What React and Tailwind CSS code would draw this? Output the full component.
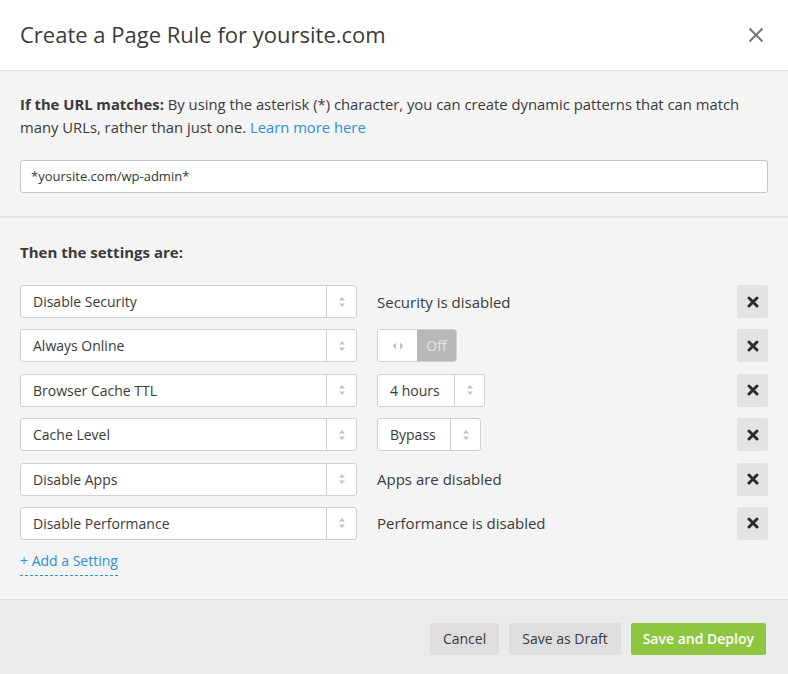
import React from 'react';

const rows = [
  { label: 'Disable Security', kind: 'text', value: 'Security is disabled' },
  { label: 'Always Online', kind: 'toggle' },
  { label: 'Browser Cache TTL', kind: 'select', value: '4 hours', width: 'w-[108px]' },
  { label: 'Cache Level', kind: 'select', value: 'Bypass', width: 'w-[104px]' },
  { label: 'Disable Apps', kind: 'text', value: 'Apps are disabled' },
  { label: 'Disable Performance', kind: 'text', value: 'Performance is disabled' },
];

const Arrows = () => (
  <svg width="8" height="12" viewBox="0 0 8 12" className="text-[#c2c2c2]">
    <path d="M4 1 L7 4.5 H1 Z" fill="currentColor" />
    <path d="M4 11 L7 7.5 H1 Z" fill="currentColor" />
  </svg>
);

const Select = ({ value, className }) => (
  <div className={`flex h-[33px] bg-white border border-[#cfcfcf] rounded-[3px] ${className}`}>
    <div className="flex-1 flex items-center pl-3 text-[14px] text-[#3a3a3a]">{value}</div>
    <div className="w-[30px] flex items-center justify-center border-l border-[#cfcfcf]">
      <Arrows />
    </div>
  </div>
);

const Toggle = () => (
  <div className="flex h-[33px] w-[80px] border border-[#cfcfcf] rounded-[3px] overflow-hidden">
    <div className="w-[39px] bg-white flex items-center justify-center">
      <svg width="12" height="8" viewBox="0 0 12 8" className="text-[#c4c4c4]">
        <path d="M4 0.5 L0.5 4 L4 7.5 Z" fill="currentColor" />
        <path d="M8 0.5 L11.5 4 L8 7.5 Z" fill="currentColor" />
      </svg>
    </div>
    <div className="flex-1 bg-[#b8b8b8] flex items-center justify-center text-[14px] text-[#e4e4e4]">Off</div>
  </div>
);

const RemoveButton = () => (
  <button className="w-[31px] h-[33px] bg-[#e3e3e3] rounded-[2px] flex items-center justify-center">
    <svg width="12" height="12" viewBox="0 0 12 12">
      <path d="M2 2 L10 10 M10 2 L2 10" stroke="#2b2b2b" strokeWidth="3" strokeLinecap="round" />
    </svg>
  </button>
);

export default function App() {
  return (
    <div className="w-[788px] min-h-[674px] bg-white font-['Open_Sans',sans-serif] text-[#3a3a3a]">
      {/* Header */}
      <div className="h-[71px] flex items-center justify-between pl-5 pr-6 border-b border-[#e2e2e2]">
        <h1 className="text-[22px] text-[#3a3a3a] pb-[1px]">Create a Page Rule for yoursite.com</h1>
        <svg width="16" height="16" viewBox="0 0 16 16">
          <path d="M1.5 1.5 L14.5 14.5 M14.5 1.5 L1.5 14.5" stroke="#777" strokeWidth="2" />
        </svg>
      </div>

      {/* URL match */}
      <div className="bg-[#f4f4f4] px-5 pt-[22px] pb-[23px] border-b-2 border-[#e4e4e4]">
        <p className="text-[14.8px] leading-[23px] text-[#3a3a3a]">
          <span className="font-bold">If the URL matches:</span> By using the asterisk (*) character, you can create
          dynamic patterns that can match many URLs, rather than just one.{' '}
          <a className="text-[#2f8fd8]">Learn more here</a>
        </p>
        <div className="mt-[21px] h-[33px] bg-white border border-[#c4c4c4] rounded-[3px] flex items-center pl-[10px] text-[13px] text-[#333]">
          *yoursite.com/wp-admin*
        </div>
      </div>

      {/* Settings */}
      <div className="bg-[#f4f4f4] px-5 pt-[24px] pb-[23px] border-b border-[#e0e0e0]">
        <h2 className="text-[15px] leading-[20px] font-bold text-[#3a3a3a]">Then the settings are:</h2>
        <div className="mt-[23px] flex flex-col gap-[11.4px]">
          {rows.map((row) => (
            <div key={row.label} className="flex items-center">
              <Select value={row.label} className="w-[337px]" />
              <div className="flex-1 pl-5">
                {row.kind === 'text' && <span className="text-[15px] text-[#3a3a3a]">{row.value}</span>}
                {row.kind === 'toggle' && <Toggle />}
                {row.kind === 'select' && <Select value={row.value} className={row.width} />}
              </div>
              <RemoveButton />
            </div>
          ))}
        </div>
        <a className="inline-block mt-[11px] text-[14px] leading-[20px] text-[#2f8fd8] border-b border-dashed border-[#2f8fd8] pb-[4px]">
          + Add a Setting
        </a>
      </div>

      {/* Footer */}
      <div className="bg-[#ebebeb] h-[76px] pt-[23px] pr-[22px] flex justify-end items-start gap-[10px]">
        <button className="h-[32px] px-[13px] bg-[#dedede] rounded-[2px] text-[14px] text-[#3a3a3a]">Cancel</button>
        <button className="h-[32px] px-[13px] bg-[#dedede] rounded-[2px] text-[14px] text-[#3a3a3a]">Save as Draft</button>
        <button className="h-[32px] px-[12px] bg-[#8ec63f] rounded-[2px] text-[14px] font-semibold text-white">Save and Deploy</button>
      </div>
    </div>
  );
}
